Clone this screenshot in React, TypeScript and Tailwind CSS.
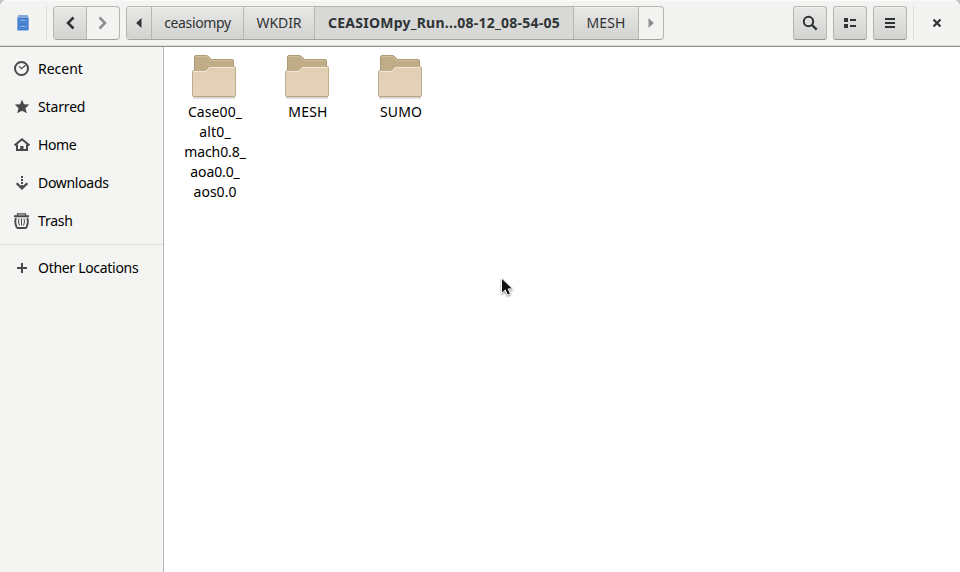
import type { ReactNode } from "react";

const raised =
  "bg-linear-to-b from-[#e8e8e7] to-[#d2d2d0] shadow-[inset_0_1px_#f1f1f0]";

function Recent() {
  return (
    <svg width="16" height="16" viewBox="0 0 16 16" fill="none" stroke="#484948">
      <circle cx="7.5" cy="7.5" r="6.5" strokeWidth="2" />
      <path d="M5 5.2 7.5 7.700 11.500 4.200" strokeWidth="1.2" />
    </svg>
  );
}

function Star() {
  return (
    <svg width="16" height="16" viewBox="0 0 16 16" fill="#484948">
      <path d="M8 .8 10 5.200 15.200 5.500 11.500 9.200 12.800 14.200 8 11.800 3.200 14.200 4.500 9.200.8 5.500 6 5.200Z" />
    </svg>
  );
}

function Home() {
  return (
    <svg width="16" height="16" viewBox="0 0 16 16">
      <path d="M.6 8.400 8 2.300l7.400 6.100" fill="none" stroke="#484948" strokeWidth="2" />
      <path d="M3 7.5V13h10V7.5" fill="none" stroke="#484948" strokeWidth="2" />
      <path d="M6.200 9h3.300v4.500H6.200z" fill="#484948" />
    </svg>
  );
}

function Download() {
  return (
    <svg width="16" height="16" viewBox="0 0 16 16" fill="none" stroke="#484948" strokeWidth="2">
      <path d="M8 1v2M8 4v2M8 7v2M8 10v3" />
      <path d="m2.700 8.300 5.300 5.200 5.300-5.200" strokeWidth="2.300" />
    </svg>
  );
}

function Trash() {
  return (
    <svg width="16" height="16" viewBox="0 0 16 16" fill="none" stroke="#484948">
      <path d="M0 3.2h15" strokeWidth="2" />
      <path d="M3.5 2.5V.8h8v1.7" strokeWidth="1.3" />
      <path d="M1.900 5q-1.500 4 .600 9 .400 1 1.400 1h7.400q1 0 1.400-1 2-5 .500-9" strokeWidth="1.9" />
      <path d="M5 5.5q-1.2 3.5.5 7M7.5 5.5v7M10 5.5q1.2 3.5-.5 7" strokeWidth="1" />
    </svg>
  );
}

function Plus() {
  return (
    <svg width="16" height="16" viewBox="0 0 16 16">
      <path d="M3 8h10M8 3v10" stroke="#484948" strokeWidth="2" />
    </svg>
  );
}

function Folder() {
  return (
    <svg width="48" height="48" viewBox="0 0 48 48" className="mr-px block">
      <defs>
        <linearGradient id="front" x1="0" y1="0" x2="0" y2="1">
          <stop offset="0" stopColor="#e0ceb3" />
          <stop offset="1" stopColor="#e6d3bb" />
        </linearGradient>
      </defs>
      <path d="M3 45.800h42" stroke="#000" strokeOpacity=".22" strokeWidth="1.2" />
      <path
        d="M4.500 42V5q0-1.500 1.500-1.500h10.500q1 0 2 1L21.500 7.500H42q1.500 0 1.500 1.500v33z"
        fill="#c0ad88"
        stroke="#ad9b78"
      />
      <path d="M5.500 5q0-.5.5-.5h10.500l4.300 4H42.500" fill="none" stroke="#cfbf9f" />
      <path
        d="M2.500 43V20q0-1.500 1.500-1.500h10.500q1.500 0 2.300-1l1.400-2q.8-1 2-1H44q1.500 0 1.500 1.500v27q0 1.500-1.500 1.500H4q-1.500 0-1.500-1.500z"
        fill="url(#front)"
        stroke="#c2ad8b"
      />
      <path d="M3.500 20q0-.5.5-.5h11q1 0 2-1l1.800-2.500q.5-.5 1.500-.5H44.500" fill="none" stroke="#f2e7d6" />
      <path d="M3 44.500h42" stroke="#b9a47f" />
    </svg>
  );
}

function Row({ icon, children }: { icon: ReactNode; children: ReactNode }) {
  return (
    <div className="flex h-[38px] items-center gap-2 pl-[14px] text-black">
      {icon}
      <div className="pb-[2px]">{children}</div>
    </div>
  );
}

function ToolButton({ children }: { children: ReactNode }) {
  return (
    <button
      className={`flex h-[34px] w-[34px] items-center justify-center rounded-[3px] border border-[#b6b6b3] border-b-[#979792] ${raised}`}
    >
      {children}
    </button>
  );
}

function FolderItem({ lines }: { lines: { text: string; className: string }[] }) {
  return (
    <div className="flex w-[93px] flex-col items-center">
      <Folder />
      <div className="mt-[2px] flex flex-col items-center pl-px leading-5 text-black">
        {lines.map((line) => (
          <span key={line.text} className={line.className}>
            {line.text}
          </span>
        ))}
      </div>
    </div>
  );
}

export default function App() {
  return (
    <div className="h-[572px] w-[960px] overflow-hidden bg-[#c4c4c4] font-['Noto_Sans',sans-serif] text-[14px] whitespace-nowrap select-none">
      <div className="flex h-full flex-col overflow-hidden rounded-t-[7px] bg-white">
        <header className="flex h-[47px] shrink-0 border-b border-[#919189] bg-[#f3f3f2] pt-[6px] text-[#2e3436] shadow-[inset_0_1px_#fafafa,inset_0_-1px_#dcdcd8]">
          <div className="mr-[6px] flex h-[34px] w-[47px] items-center border-r border-[#dededc] pl-[17px]">
            <svg width="12" height="16" viewBox="0 0 12 16">
              <path d="M1.500.5h9L11.500 3v12.500H.5V3z" fill="#4a86d5" />
              <path d="M1.500 0h9l1.200 3H.3z" fill="#83a9d6" />
              <path d="M1 3.500h10v5H1zM1 9.500h10v5H1z" fill="#4f89d8" stroke="#3f79c8" strokeWidth=".7" />
              <path d="M4 5.500h4M4 11.500h4" stroke="#9bbce5" />
              <path d="M4 6.500h4M4 12.500h4" stroke="#356bb3" strokeWidth=".7" />
            </svg>
          </div>
          <div className="mr-[6px] flex h-[34px] w-[67px] overflow-hidden rounded-[4px] border border-[#b6b6b3] border-b-[#a3a39f]">
            <button className={`flex w-[33px] items-center justify-center border-r border-[#b6b6b3] ${raised}`}>
              <svg width="16" height="16" viewBox="0 0 16 16" fill="none" stroke="#2e3436" strokeWidth="2.500">
                <path d="m11.500 2.500-5.500 5.500 5.500 5.500" />
              </svg>
            </button>
            <button className="flex w-8 items-center justify-center">
              <svg width="16" height="16" viewBox="0 0 16 16" fill="none" stroke="#8b8e8f" strokeWidth="2.500">
                <path d="m4.500 2.500 5.500 5.500-5.500 5.500" />
              </svg>
            </button>
          </div>
          <nav className="flex h-[34px] w-[538px] overflow-hidden rounded-[4px] border border-[#b6b6b3] border-b-[#a3a39f]">
            <button className={`flex w-[25px] items-center justify-center border-r border-[#b6b6b3] ${raised}`}>
              <svg width="6" height="10" viewBox="0 0 6 10">
                <path d="M5.500 0v10L.2 5z" fill="#2e3436" />
              </svg>
            </button>
            <button className={`w-[92px] border-r border-[#b6b6b3] pb-[2px] ${raised}`}>
              <span className="tracking-[-0.35px]">ceasiompy</span>
            </button>
            <button className={`w-[71px] border-r border-[#b6b6b3] pb-[2px] ${raised}`}>
              <span className="tracking-[-0.1px]">WKDIR</span>
            </button>
            <button className="w-[259px] border-r border-[#b6b6b3] bg-[#d8d8d7] pb-[2px] font-bold">
              <span className="tracking-[0.24px]">CEASIOMpy_Run...08-12_08-54-05</span>
            </button>
            <button className={`w-[65px] border-r border-[#b6b6b3] pb-[2px] ${raised}`}>
              <span className="tracking-[0.1px]">MESH</span>
            </button>
            <button className="flex w-6 items-center justify-center">
              <svg width="6" height="10" viewBox="0 0 6 10">
                <path d="M.5 0v10l5.300-5z" fill="#8b8e8f" />
              </svg>
            </button>
          </nav>
          <div className="ml-auto flex gap-[6px]">
            <ToolButton>
              <svg width="16" height="16" viewBox="0 0 16 16" fill="none" stroke="#2e3436" strokeWidth="2">
                <circle cx="6.500" cy="6.500" r="4.700" />
                <path d="m10 10 4.700 4.700" strokeWidth="2.400" />
              </svg>
            </ToolButton>
            <ToolButton>
              <svg width="16" height="16" viewBox="0 0 16 16" fill="#2e3436">
                <path d="M2 3h4v4H2zM2 9h4v4H2zM8 4h6v2H8zM8 10h6v2H8z" />
              </svg>
            </ToolButton>
            <ToolButton>
              <svg width="16" height="16" viewBox="0 0 16 16" fill="#2e3436">
                <path d="M3 3h10v2H3zM3 7h10v2H3zM3 11h10v2H3z" />
              </svg>
            </ToolButton>
          </div>
          <div className="ml-[6px] flex h-[34px] w-[47px] items-center justify-center border-l border-[#dededc]">
            <svg width="16" height="16" viewBox="0 0 16 16" stroke="#2e3436" strokeWidth="2.200">
              <path d="m4.500 4.500 7 7M11.500 4.500l-7 7" />
            </svg>
          </div>
        </header>
        <div className="flex min-h-0 flex-1">
          <aside className="w-[164px] shrink-0 border-r border-[#b6b6b3] bg-[#f4f4f2] pt-[3px]">
            <Row icon={<Recent />}>
              <span className="tracking-[0px]">Recent</span>
            </Row>
            <Row icon={<Star />}>
              <span className="tracking-[-0.15px]">Starred</span>
            </Row>
            <Row icon={<Home />}>
              <span className="tracking-[-0.4px]">Home</span>
            </Row>
            <Row icon={<Download />}>
              <span className="tracking-[-0.3px]">Downloads</span>
            </Row>
            <Row icon={<Trash />}>
              <span className="tracking-[-0.2px]">Trash</span>
            </Row>
            <div className="mt-1 mb-1 h-px bg-[#dcdcda]" />
            <Row icon={<Plus />}>
              <span className="tracking-[-0.3px]">Other Locations</span>
            </Row>
          </aside>
          <main className="relative flex flex-1 items-start pt-[5px] pl-1">
            <FolderItem
              lines={[
                { text: "Case00_", className: "tracking-[0.1px]" },
                { text: "alt0_", className: "tracking-[0.2px]" },
                { text: "mach0.8_", className: "tracking-[-0.1px]" },
                { text: "aoa0.0_", className: "tracking-[-0.1px]" },
                { text: "aos0.0", className: "tracking-[0px]" },
              ]}
            />
            <FolderItem lines={[{ text: "MESH", className: "tracking-[0.2px]" }]} />
            <FolderItem lines={[{ text: "SUMO", className: "tracking-[0.1px]" }]} />
            <svg className="absolute top-[230px] left-[336px]" width="14" height="22" viewBox="0 0 14 22">
              <path
                d="M1.500 1v15.500l3.800-3.500 2.200 5.200 3-1.300-2.300-5h4.600z"
                fill="#111"
                stroke="#fff"
                className="drop-shadow-[0_1px_1px_rgba(0,0,0,0.45)]"
              />
            </svg>
          </main>
        </div>
      </div>
    </div>
  );
}
